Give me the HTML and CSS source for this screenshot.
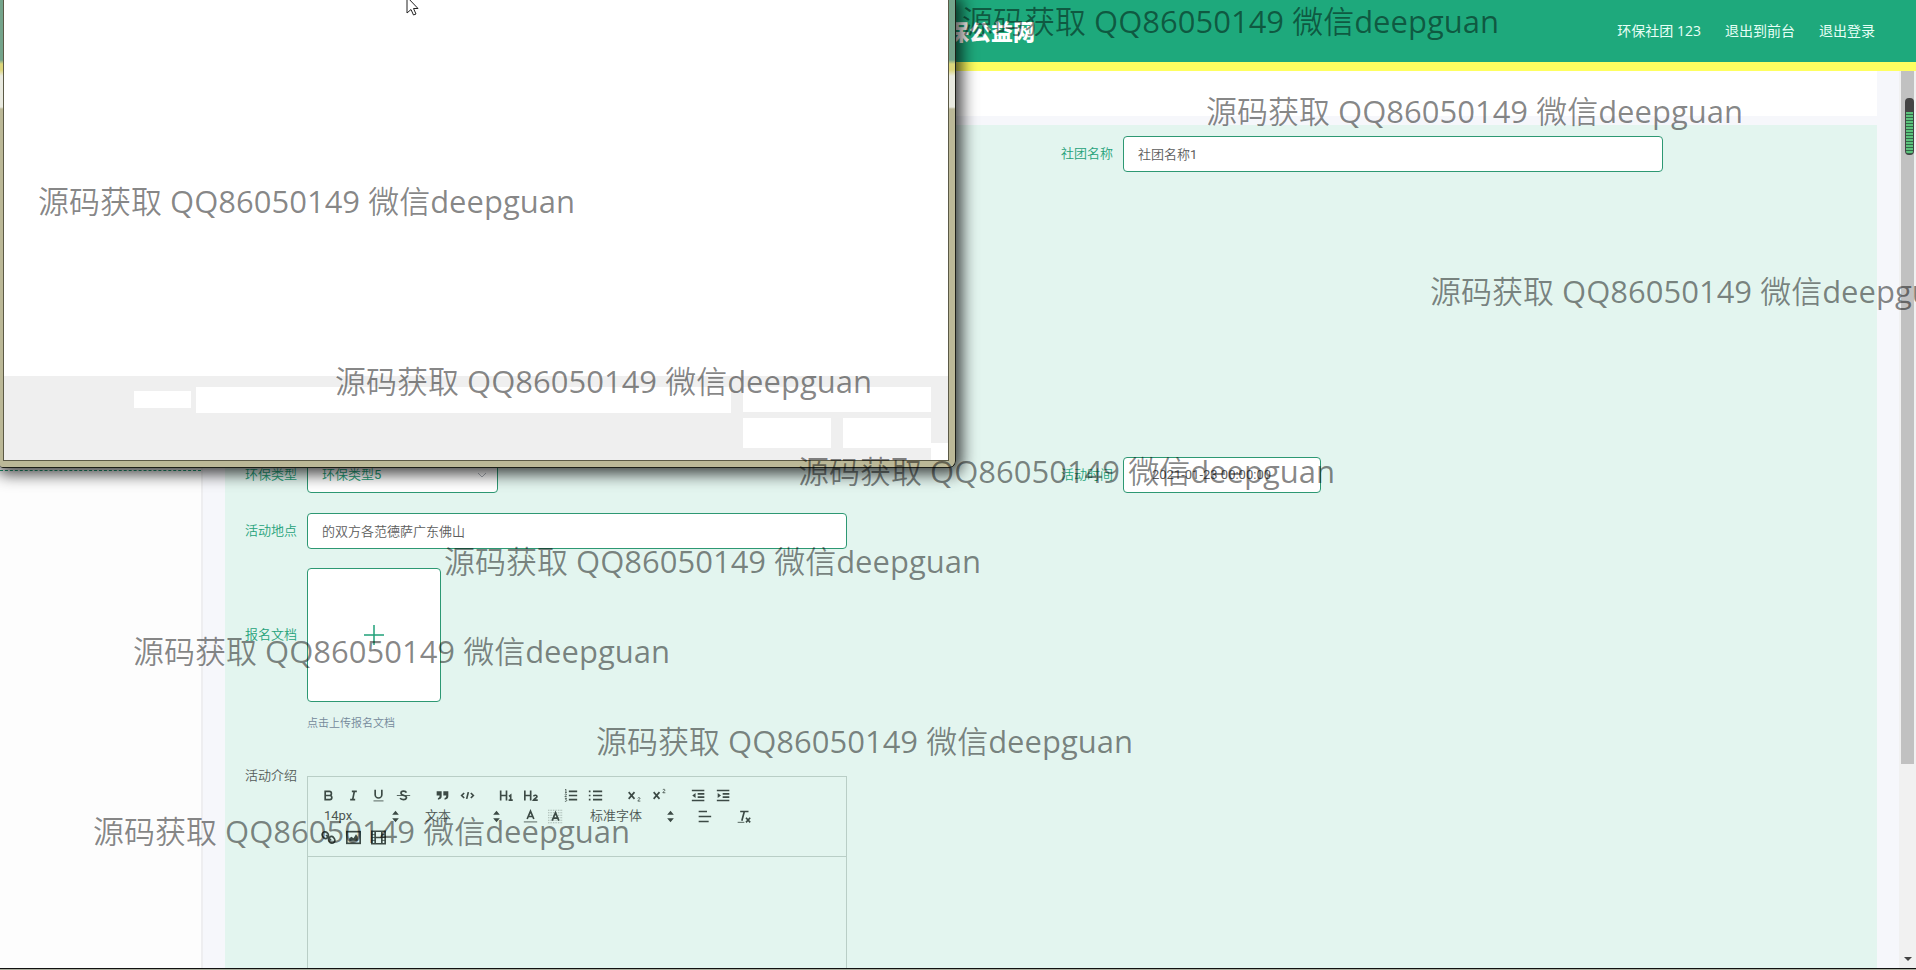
FILE: index.html
```html
<!DOCTYPE html>
<html lang="zh-CN">
<head>
<meta charset="utf-8">
<title>环保公益网</title>
<link rel="stylesheet" href="styles.css">
</head>
<body>
<div class="app">
  <header class="topbar">
    <h1 class="logo">保公益网</h1>
    <nav class="user-nav">
      <a href="#">环保社团 123</a>
      <a href="#">退出到前台</a>
      <a href="#">退出登录</a>
    </nav>
  </header>

  <div class="body">
    <aside class="sidebar"><div class="menu-line"></div></aside>
    <main class="content">
      <div class="crumbs"></div>
      <form class="form">
        <div class="row row-first">
          <div class="field field-right">
            <label for="club">社团名称</label>
            <input id="club" class="box" type="text" value="社团名称1">
          </div>
        </div>
        <div class="row">
          <div class="field">
            <label for="kind">环保类型</label>
            <div class="select-wrap">
              <select id="kind" class="box"><option>环保类型5</option></select>
              <svg class="chevron" width="10" height="6" viewBox="0 0 10 6"><path d="M1 1l4 4 4-4" fill="none" stroke="#b0b4bc"/></svg>
            </div>
          </div>
          <div class="field">
            <label for="time">活动时间</label>
            <input id="time" class="box date" type="text" value="2021-01-23 00:00:00">
          </div>
        </div>
        <div class="row row-place">
          <div class="field">
            <label for="place">活动地点</label>
            <input id="place" class="box" type="text" value="的双方各范德萨广东佛山">
          </div>
        </div>
        <div class="row">
          <div class="field">
            <label for="doc">报名文档</label>
            <button id="doc" class="upload" type="button">
              <svg width="22" height="22" viewBox="0 0 22 22"><path d="M11 1v20M1 11h20" stroke="#21a179" stroke-width="1.5"/></svg>
            </button>
          </div>
        </div>
        <p class="tip">点击上传报名文档</p>
        <div class="row">
          <div class="field field-top">
            <label class="plain" for="intro">活动介绍</label>
            <div class="editor">
              <div class="toolbar">
                <div class="tools">
                  <div class="group">
                    <button type="button"><svg viewBox="0 0 18 18"><path class="s" d="M5 4h5a2.5 2.5 0 010 5H5zM5 9h5.500a2.500 2.500 0 010 5H5z"/></svg></button>
                    <button type="button"><svg viewBox="0 0 18 18"><path class="s" d="M7 4h6M5 14h6M8 14l2-10"/></svg></button>
                    <button type="button"><svg viewBox="0 0 18 18"><path class="s" d="M5 2v6a4 4 0 008 0V2"/><rect class="f" x="3" y="15" width="12" height="1"/></svg></button>
                    <button type="button"><svg viewBox="0 0 18 18"><path class="t" d="M1 9h16"/><path class="s" d="M12.500 5.500C11.500 3 6 3 6 6c0 2 2 2.500 3.500 3S13 10 12.500 12c-.7 2.700-6.500 2.500-7.500 0"/></svg></button>
                  </div>
                  <div class="group">
                    <button type="button"><svg viewBox="0 0 18 18"><path class="f" d="M2 4h6v6c0 2.500-2 4-4.500 4v-2C5 12 5.500 11 5.500 9H2zM10 4h6v6c0 2.500-2 4-4.500 4v-2c1.500 0 2-1 2-3H10z"/></svg></button>
                    <button type="button"><svg viewBox="0 0 18 18"><path class="s" d="M5 6L2 9l3 3M13 6l3 3-3 3M10 5l-2 8"/></svg></button>
                  </div>
                  <div class="group">
                    <button type="button"><svg viewBox="0 0 18 18"><path class="s" d="M2 3v12M9 3v12M2 9h7M14 15V8.500L12 10M11.500 14.500h5"/></svg></button>
                    <button type="button"><svg viewBox="0 0 18 18"><path class="s" d="M1 3v12M8 3v12M1 9h7M11.500 10c.5-2 4.500-1.500 4 .5-.3 1.200-3 2.500-4 4h5"/></svg></button>
                  </div>
                  <div class="group">
                    <button type="button"><svg viewBox="0 0 18 18"><path class="s" d="M7 4h10M7 9h10M7 14h10"/><path class="t" d="M2.500 5.500h2M3.500 5.500v-4l-1 .6M2.300 8c.3-1.200 2-1 1.900 0 0 .8-1.400 1.200-1.900 2.400h2.200M2.300 12.500h2l-1 1.500c1.800 0 1.500 2.500-1 2"/></svg></button>
                    <button type="button"><svg viewBox="0 0 18 18"><path class="s" d="M6 4h11M6 9h11M6 14h11M1 4h2M1 9h2M1 14h2"/></svg></button>
                  </div>
                  <div class="group">
                    <button type="button"><svg viewBox="0 0 18 18"><path class="s" d="M2 5l7 8M9 5l-7 8"/><path class="t" d="M13 12.500c.3-1.500 2.800-1.200 2.500.2-.2 1-2.500 1.800-2.500 3h3"/></svg></button>
                    <button type="button"><svg viewBox="0 0 18 18"><path class="s" d="M2 5l7 8M9 5l-7 8"/><path class="t" d="M13 2.500c.3-1.500 2.800-1.200 2.500.2-.2 1-2.500 1.800-2.500 3h3"/></svg></button>
                  </div>
                  <div class="group">
                    <button type="button"><svg viewBox="0 0 18 18"><path class="s" d="M1 3h15M8 7h8M8 11h8M1 15h15"/><path class="f" d="M5.500 6v6L1.500 9z"/></svg></button>
                    <button type="button"><svg viewBox="0 0 18 18"><path class="s" d="M1 3h15M8 7h8M8 11h8M1 15h15"/><path class="f" d="M2 6v6l4-3z"/></svg></button>
                  </div>
                </div>
                <div class="tools">
                  <div class="pick"><select><option>14px</option></select><svg viewBox="0 0 18 18"><path class="f" d="M9 2l4 5H5zM9 16l4-5H5z"/></svg></div>
                  <div class="pick"><select><option>文本</option></select><svg viewBox="0 0 18 18"><path class="f" d="M9 2l4 5H5zM9 16l4-5H5z"/></svg></div>
                  <div class="group">
                    <button type="button"><svg viewBox="0 0 18 18"><path class="s" d="M5 12L9 2.500l4 9.500M6.500 9h5"/><path class="t" d="M1 15.500h16"/></svg></button>
                    <button type="button"><svg viewBox="0 0 18 18"><path class="d" d="M0 1.500h18M0 4.500h18M0 7.500h18M0 10.500h18M0 13.500h18M0 16.500h18"/><path class="s" d="M5 14L9 4.500l4 9.500M6.500 11h5"/></svg></button>
                  </div>
                  <div class="pick pick-font"><select><option>标准字体</option></select><svg viewBox="0 0 18 18"><path class="f" d="M9 2l4 5H5zM9 16l4-5H5z"/></svg></div>
                  <div class="group">
                    <button type="button"><svg viewBox="0 0 18 18"><path class="s" d="M2 3h10M2 9h15M2 15h12"/></svg></button>
                  </div>
                  <div class="group">
                    <button type="button"><svg viewBox="0 0 18 18"><path class="s" d="M5 3h10M7 14l3-11M12 10.500l5 5.500M17 10.500L12 16"/><path class="t" d="M2 16h8"/></svg></button>
                  </div>
                </div>
                <div class="tools">
                  <div class="group">
                    <button type="button"><svg viewBox="0 0 18 18"><path class="s" d="M7.500 9.500C6 11 4 10.500 2.500 8.500S1 4.500 2.500 3s4-1 5.500 1 1 4-.500 5.500zM15.500 15c-1.500 1.500-4 1-5.500-1s-1-4 .5-5.500 3.500-1 5 1 1.500 4 0 5.500zM6 6l6 6"/></svg></button>
                    <button type="button"><svg viewBox="0 0 18 18"><rect class="s" x="1" y="2" width="16" height="14"/><path class="f" d="M4 13v-3l2.500-2L9 10l3-5 2 3v5z"/></svg></button>
                    <button type="button"><svg viewBox="0 0 18 18"><path class="s" d="M1 1.500h16v15H1zM5 1.500v15M13 1.500v15M5 9h8"/><path class="t" d="M1 5.500h4M1 9h4M1 12.500h4M13 5.500h4M13 9h4M13 12.500h4"/></svg></button>
                  </div>
                </div>
              </div>
              <textarea id="intro"></textarea>
            </div>
          </div>
        </div>
      </form>
    </main>
    <div class="scroll">
      <div class="scroll-thumb"><span class="meter"></span></div>
      <span class="scroll-down"></span>
    </div>
  </div>
  <div class="taskbar"></div>

  <div class="dialog">
    <div class="dialog-inner">
      <div class="files"></div>
      <div class="dialog-foot">
        <div class="b b-label"></div>
        <div class="b b-name"></div>
        <div class="b-side">
          <div class="b b-type"></div>
          <div class="b b-btn"></div>
          <div class="b b-btn"></div>
        </div>
        <div class="b b-grip"></div>
      </div>
    </div>
  </div>

  <svg class="cursor" width="14" height="20" viewBox="0 0 14 20"><path d="M1 1v16l4-3.500 2.500 5.500 2.500-1-2.500-5.500H12z" fill="#fff" stroke="#222"/></svg>

  <div class="marks">
    <span class="m1">源码获取 QQ86050149 微信deepguan</span>
    <span class="m2">源码获取 QQ86050149 微信deepguan</span>
    <span class="m3">源码获取 QQ86050149 微信deepguan</span>
    <span class="m4">源码获取 QQ86050149 微信deepguan</span>
    <span class="m5">源码获取 QQ86050149 微信deepguan</span>
    <span class="m6">源码获取 QQ86050149 微信deepguan</span>
    <span class="m7">源码获取 QQ86050149 微信deepguan</span>
    <span class="m8">源码获取 QQ86050149 微信deepguan</span>
    <span class="m9">源码获取 QQ86050149 微信deepguan</span>
    <span class="m10">源码获取 QQ86050149 微信deepguan</span>
  </div>
</div>
</body>
</html>
```
FILE: styles.css
```css
* { box-sizing: border-box; }
body {
  margin: 0;
  font-family: Roboto, "Noto Sans CJK SC DemiLight", "Noto Sans CJK SC", sans-serif;
  font-size: 13px;
  color: #555;
}
input, select, button, textarea { font: inherit; color: inherit; margin: 0; }

.app {
  position: relative;
  display: flex;
  flex-direction: column;
  height: 100vh;
  overflow: hidden;
}

/* Header */
.topbar {
  flex: none;
  display: flex;
  align-items: center;
  justify-content: space-between;
  height: 71px;
  padding: 0 41px 2px 947px;
  background: #1ea97c;
  border-bottom: 9px solid #ffff60;
}
.logo {
  margin: 0;
  font-family: "Noto Sans CJK SC", sans-serif;
  font-size: 22px;
  font-weight: 900;
  color: #fff;
  white-space: nowrap;
}
.user-nav {
  display: flex;
  gap: 24px;
  font-family: "Open Sans", "Noto Sans CJK SC", sans-serif;
  font-size: 14px;
  white-space: nowrap;
}
.user-nav a { color: #e6fff6; text-decoration: none; }

/* Page body */
.body { flex: 1; display: flex; min-height: 0; background: #f6f7fb; }
.sidebar { flex: none; width: 203px; background: #fdfdfd; border-right: 2px solid #eeeef0; }
.menu-line { height: 400px; border-bottom: 1px dashed #21a179; }
.content { flex: 1; min-width: 0; padding: 0 22px; overflow: hidden; }
.crumbs { height: 45px; margin-bottom: 9px; background: #fff; }
.form { padding: 11px 10px; min-height: 900px; background: #e3f5ef; }

.row { display: grid; grid-template-columns: 1fr 1fr; margin-bottom: 20px; }
.row-first { margin-bottom: 285px; }
.row-place { margin-bottom: 19px; }
.field { display: flex; align-items: center; }
.field-right { grid-column: 2; }
.field-top { align-items: flex-start; }
.field label {
  flex: none;
  width: 72px;
  padding: 0 10px 1px 0;
  line-height: 18px;
  text-align: right;
  white-space: nowrap;
  color: #25a27a;
}
.field label.plain { color: #555c59; margin-top: -9px; }
.box {
  width: 540px;
  height: 36px;
  padding: 0 14px 2px;
  border: 1px solid #2d9873;
  border-radius: 4px;
  background: #fff;
  color: #5c5c5c;
}
.select-wrap { position: relative; width: 191px; }
.select-wrap .box { width: 100%; appearance: none; color: #25a27a; }
.chevron { position: absolute; right: 11px; top: 15px; }
.date { width: 198px; padding: 0 10px 2px 28px; }
.upload {
  display: flex;
  align-items: center;
  justify-content: center;
  width: 134px;
  height: 134px;
  padding: 0;
  border: 1px solid #2d9873;
  border-radius: 4px;
  background: #fff;
}
.tip { margin: 0 0 46px 72px; font-size: 11px; line-height: 12px; color: #74889a; }
.row + .tip { margin-top: -4px; }

/* Editor */
.editor { width: 540px; border: 1px solid #b9cec6; }
.toolbar {
  display: flex;
  flex-direction: column;
  height: 80px;
  padding: 8px;
  border-bottom: 1px solid #b9cec6;
}
.tools { display: flex; gap: 14px; height: 21px; }
.group { display: flex; }
.group button {
  display: flex;
  align-items: center;
  justify-content: center;
  width: 25px;
  height: 20px;
  padding: 0;
  border: 0;
  background: none;
}
.tools svg { width: 15px; height: 15px; fill: none; }
.s { stroke: #3c4a45; stroke-width: 2; fill: none; }
.t { stroke: #3c4a45; stroke-width: 1; fill: none; }
.f { fill: #3c4a45; }
.d { stroke: #8b9a94; stroke-width: 1; stroke-dasharray: 1 1; fill: none; }
.pick { display: flex; align-items: center; width: 87px; height: 20px; }
.pick-font { width: 96px; }
.pick select {
  flex: 1;
  min-width: 0;
  height: 20px;
  padding: 0 0 2px 8px;
  border: 0;
  appearance: none;
  background: none;
  color: #4c5552;
}
.editor textarea { display: block; width: 100%; height: 200px; border: 0; resize: none; background: none; }

/* Scrollbar */
.scroll {
  flex: none;
  display: flex;
  flex-direction: column;
  align-items: center;
  justify-content: space-between;
  width: 17px;
  padding-bottom: 7px;
  background: #f1f1f1;
}
.scroll-thumb { width: 13px; height: 693px; padding: 27px 0 0 4px; background: #c1c1c1; }
.meter {
  display: block;
  width: 9px;
  height: 57px;
  border: 1px solid #444;
  border-top-width: 14px;
  border-radius: 4px;
  background: repeating-linear-gradient(#5cc27c 0 2px, #34694a 2px 3px);
}
.scroll-down { border: 4px solid transparent; border-top-color: #444; border-bottom: 0; }
.taskbar { flex: none; height: 2px; background: #a9ac9c; border-top: 1px solid #111; }

/* File window above the page */
.dialog {
  position: absolute;
  top: 0;
  left: 0;
  width: 956px;
  padding: 0 6px 6px 3px;
  border: solid #1d1f18;
  border-width: 0 1px 1px 0;
  border-radius: 0 0 7px 3px;
  background: linear-gradient(#74a48b 0 60px, #dcd67c 64px 70px, #e9eae0 76px 107px, #bbb897 109px);
  box-shadow: 2px 2px 16px 4px rgba(0, 0, 0, .75);
}
.dialog-inner { border: solid #5b5946; border-width: 0 1px 1px 1px; background: #fff; }
.files { height: 376px; }
.dialog-foot {
  position: relative;
  display: flex;
  align-items: flex-start;
  height: 84px;
  padding: 11px 17px 0 130px;
  background: #efefef;
}
.b { background: #fff; }
.b-label { width: 57px; height: 17px; margin: 4px 5px 0 0; }
.b-name { flex: 1; height: 26px; }
.b-side { display: grid; grid-template-columns: 88px 88px; gap: 6px 12px; margin-left: 12px; }
.b-type { grid-column: 1 / 3; height: 25px; }
.b-btn { height: 30px; }
.b-grip { position: absolute; right: 0; bottom: 0; width: 17px; height: 17px; }
.cursor { position: absolute; left: 406px; top: -4px; }

/* Floating marks */
.marks { position: absolute; inset: 0; overflow: hidden; pointer-events: none; }
.marks span {
  position: absolute;
  font-family: "Open Sans", "Noto Sans CJK SC DemiLight", "Noto Sans CJK SC", sans-serif;
  font-size: 31px;
  line-height: 40px;
  white-space: nowrap;
  color: rgba(0, 0, 0, .48);
}
.m1 { left: 962px; top: 1px; }
.m2 { left: 1206px; top: 91px; }
.m3 { left: 38px; top: 181px; }
.m4 { left: 1430px; top: 271px; }
.m5 { left: 335px; top: 361px; }
.m6 { left: 798px; top: 451px; }
.m7 { left: 444px; top: 541px; }
.m8 { left: 133px; top: 631px; }
.m9 { left: 596px; top: 721px; }
.m10 { left: 93px; top: 811px; }
```
